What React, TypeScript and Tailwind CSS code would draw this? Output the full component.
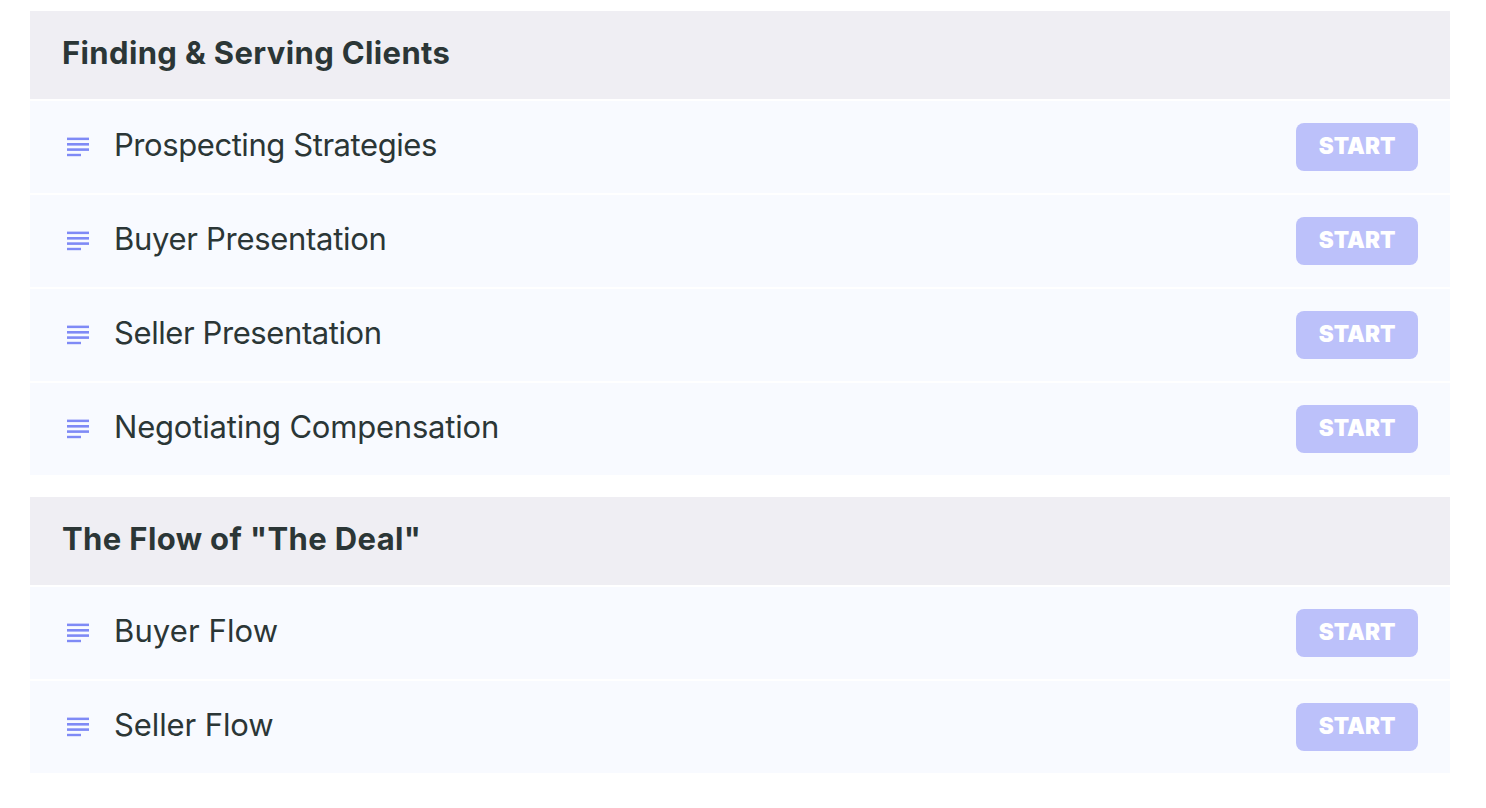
import React from 'react';

interface Lesson {
  title: string;
  tracking: string;
}

interface Section {
  title: string;
  tracking: string;
  lessons: Lesson[];
}

const sections: Section[] = [
  {
    title: 'Finding & Serving Clients',
    tracking: 'tracking-[0.36px]',
    lessons: [
      { title: 'Prospecting Strategies', tracking: 'tracking-[-0.43px]' },
      { title: 'Buyer Presentation', tracking: 'tracking-[-0.3px]' },
      { title: 'Seller Presentation', tracking: 'tracking-[-0.41px]' },
      { title: 'Negotiating Compensation', tracking: 'tracking-[-0.2px]' },
    ],
  },
  {
    title: 'The Flow of "The Deal"',
    tracking: 'tracking-[0.38px]',
    lessons: [
      { title: 'Buyer Flow', tracking: 'tracking-[0.1px]' },
      { title: 'Seller Flow', tracking: 'tracking-[-0.1px]' },
    ],
  },
];

function TextIcon() {
  return (
    <svg className="w-6 h-6 shrink-0 text-[#7f8af6]" viewBox="0 0 24 24" fill="currentColor">
      <rect x="1" y="2.6" width="22" height="2.5" />
      <rect x="1" y="8" width="22" height="2.6" />
      <rect x="1" y="13.3" width="22" height="2.6" />
      <rect x="1" y="18.8" width="14" height="2.4" />
    </svg>
  );
}

function LessonRow({ title, tracking }: Lesson) {
  return (
    <li className="flex items-center h-[92px] pl-9 pr-8 bg-[#f8faff]">
      <TextIcon />
      <span className={`ml-6 pb-1 text-[31px] leading-10 whitespace-nowrap ${tracking}`}>{title}</span>
      <button className="ml-auto w-[122px] h-12 pb-[2px] rounded-lg bg-[#bcc1fa] text-white text-[22.5px] leading-none font-black">
        START
      </button>
    </li>
  );
}

export default function App() {
  return (
    <main className="min-h-screen bg-white pt-[11px] pl-[30px] pr-9 font-['Inter',sans-serif] text-[#2b3636]">
      <div className="flex flex-col gap-[22px]">
        {sections.map((section) => (
          <section key={section.title} className="flex flex-col gap-[2px]">
            <header className="flex items-center h-[88px] px-8 pb-1 bg-[#efeef3]">
              <h2 className={`text-[31px] leading-10 font-bold whitespace-nowrap ${section.tracking}`}>
                {section.title}
              </h2>
            </header>
            <ul className="flex flex-col gap-[2px]">
              {section.lessons.map((lesson) => (
                <LessonRow key={lesson.title} {...lesson} />
              ))}
            </ul>
          </section>
        ))}
      </div>
    </main>
  );
}
